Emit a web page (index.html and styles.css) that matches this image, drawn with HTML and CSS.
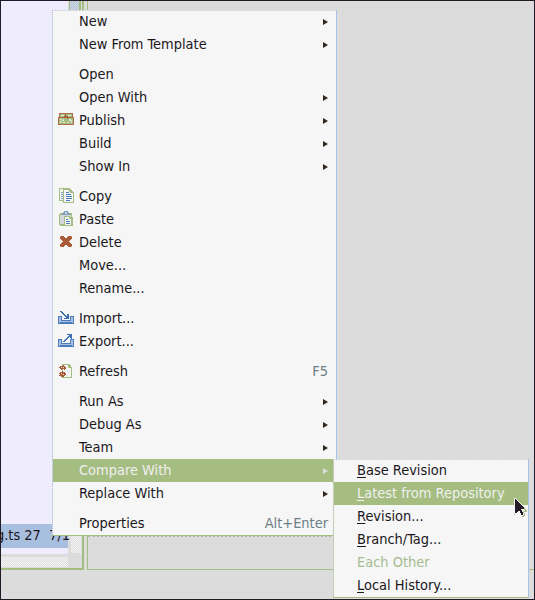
FILE: index.html
```html
<!DOCTYPE html>
<html lang="en">
<head>
<meta charset="utf-8">
<title>Compare With</title>
<link rel="stylesheet" href="styles.css">
</head>
<body>
<main class="desktop">
  <div class="panes">
    <section class="table-pane">
      <div class="table-body"></div>
      <div class="table-row">g.ts 27&nbsp; 7/1</div>
      <div class="table-gap"></div>
      <div class="h-scroll"></div>
    </section>
    <div class="v-scroll"><span class="thumb"></span><span class="hatch"></span></div>
    <section class="side-pane"><div class="side-body"></div></section>
  </div>

  <nav class="menu main-menu">
    <div class="item more">New</div>
    <div class="item more">New From Template</div>
    <hr>
    <div class="item">Open</div>
    <div class="item more">Open With</div>
    <div class="item more"><svg class="icon" viewBox="0 0 16 16"><path fill="#b06a45" d="M1 1h14v4h1v8H0V5h1z"/><path fill="#a4bd80" d="M2 2h12v3H2zM1 6h14v6H1z"/><path fill="#dfe8cd" d="M3 3h3v1H3zM10 3h3v1h-3zM2 7h2v1H2zM5 7h1v2H4v1H3v1H2V9h2V8h1zM11 7h2v1h1v3h-1V9h-2zM9 10h2v1H9zM6 10h1v1H5v-1z"/><path fill="#a85c3a" d="M7 2h1v2H7zM6 4h4v1H6zM9 5h1v2H9zM6 5h1v1H6z"/></svg>Publish</div>
    <div class="item more">Build</div>
    <div class="item more">Show In</div>
    <hr>
    <div class="item"><svg class="icon" viewBox="0 0 16 16"><path fill="#a4bd80" d="M1 0h6v13H1z"/><path fill="#f6f6f6" d="M2 1h5v11H2z"/><path fill="#7d9fcb" d="M3 4h2v1H3zM3 6h2v1H3zM3 8h2v1H3zM3 10h2v1H3z"/><path fill="#a4bd80" d="M6 0h6v1h1v1h1v1h1v1h1v11H5V1h1z"/><path fill="#f6f6f6" d="M6 2h5v2h1v1h3v9H6z"/><path fill="#4b7dbd" d="M8 4h3v1H8zM8 6h5v1H8zM8 8h6v1H8zM8 10h6v1H8zM8 12h4v1H8z"/></svg>Copy</div>
    <div class="item"><svg class="icon" viewBox="0 0 16 16"><path fill="#a4bd80" d="M2 2h3V1h6v1h3v4h1v9H2v-1H1V3h1z"/><path fill="#d5d8da" d="M2 4h11v9H2z"/><path fill="#7f9fbf" d="M6 0h4v2h2v2H4V2h2z"/><path fill="#c9d5e6" d="M7 1h2v2H7z"/><path fill="#a4bd80" d="M6 5h6v1h1v1h1v8H6z"/><path fill="#f6f6f6" d="M7 6h4v2h2v6H7z"/><path fill="#4b7dbd" d="M8 8h2v1H8zM8 10h4v1H8zM8 12h4v1H8z"/></svg>Paste</div>
    <div class="item"><svg class="icon" viewBox="0 0 16 16"><path fill="#a85c3a" d="M2 2h4v1h1v1h2V3h1V2h4v3h-1v1h-1v1h-1v1h1v1h1v1h1v3h-4v-1H9v-1H7v1H6v1H2v-3h1V9h1V8h1V7H4V6H3V5H2z"/><path fill="#cf9b80" d="M2 2h1v1H2zM13 2h1v1h-1zM2 12h1v1H2zM13 12h1v1h-1z"/></svg>Delete</div>
    <div class="item">Move...</div>
    <div class="item">Rename...</div>
    <hr>
    <div class="item"><svg class="icon" viewBox="0 0 16 16"><path fill="#4b7dbd" d="M0 6h4v4h8V6h4v8H0z"/><path fill="#aac1e4" d="M1 7h2v4h10V7h2v6H1z"/><path fill="#f6f6f6" d="M4 6h8v3H4z"/><path fill="#4b7dbd" d="M2 12h12v1H2z"/><path fill="#3c70b0" d="M2 1h2v1h1v1h1v1h1v1h1v1h1V4h2v5H6V8h2V7H7V6H6V5H5V4H4V3H3V2H2z"/></svg>Import...</div>
    <div class="item"><svg class="icon" viewBox="0 0 16 16"><path fill="#4b7dbd" d="M0 6h4v4h8V6h4v8H0z"/><path fill="#aac1e4" d="M1 7h2v4h10V7h2v6H1z"/><path fill="#f6f6f6" d="M4 6h8v3H4z"/><path fill="#4b7dbd" d="M2 12h12v1H2z"/><path fill="#3c70b0" d="M9 1h5v5h-1V5h-1V4h-1v1h-1v1H9v1H8v1H7v1H5V8h1V7h1V6h1V5h1V4h1V3h1V2H9z"/></svg>Export...</div>
    <hr>
    <div class="item"><svg class="icon" viewBox="0 0 16 16"><path fill="#a4bd80" d="M4 1h8v1h1v2h1v11H4z"/><path fill="#f6f6f6" d="M5 2h5v3h3v9H5z"/><path fill="#d9ddec" d="M9 8h1v1H9zM11 8h1v1h-1zM10 10h1v1h-1zM9 12h1v1H9z"/><path fill="#a85c3a" d="M2 3h3V2h1v1h1v1h1v2H7v1H6V6H4v1H3V6H2V5H1V4h1zM2 9h2V8h1v1h2v1h1v2H7v1H6v1H3v-1H1v-1h1v-1H1v-1h1z"/><path fill="#f2dfc8" d="M3 4h1v1H3zM5 4h1v1H5zM3 10h1v1H3zM5 11h1v1H5z"/></svg>Refresh<span class="key">F5</span></div>
    <hr>
    <div class="item more">Run As</div>
    <div class="item more">Debug As</div>
    <div class="item more">Team</div>
    <div class="item more selected">Compare With</div>
    <div class="item more">Replace With</div>
    <hr>
    <div class="item">Properties<span class="key">Alt+Enter</span></div>
  </nav>

  <nav class="menu sub-menu">
    <div class="item"><span><u>B</u>ase Revision</span></div>
    <div class="item selected"><span><u>L</u>atest from Repository</span></div>
    <div class="item"><span><u>R</u>evision...</span></div>
    <div class="item"><span><u>B</u>ranch/Tag...</span></div>
    <div class="item disabled"><span>Each Other</span></div>
    <div class="item"><span><u>L</u>ocal History...</span></div>
  </nav>

  <svg class="cursor" viewBox="0 0 14 20"><path fill="#f6f6f6" d="M0 0h2l11 12v2h-3l2 4-3 1H7l-2-4-4 2H0z"/><path fill="#a4bd80" d="M10 10h1v1h1v1h1v2h-3v1h1v3h-1v1H8v-1h1v-1h1v-2H9v-2h2v-1h-1zM0 16h1v1H0z"/><path fill="#241a26" d="M1 1h1v1h1v1h1v1h1v1h1v1h1v1h1v1h1v1h1v2H7v1h1v2h1v3H7v-2H6v-2H4v1H3v1H1z"/></svg>
</main>
</body>
</html>
```
FILE: styles.css
```css
* { box-sizing: border-box; }
body {
  margin: 0;
  font: 14.45px/23px "DejaVu Sans Condensed", "DejaVu Sans", sans-serif;
  font-stretch: condensed;
  color: #1b181c;
}
.desktop {
  position: relative;
  width: 535px;
  height: 600px;
  border: 1px solid #221a26;
  background: #dcdcdc;
  overflow: hidden;
}
.panes { display: flex; height: 569px; }
.table-pane {
  width: 67px;
  display: flex;
  flex-direction: column;
  border-bottom: 2px solid #a4bd80;
}
.table-body { height: 523px; background: #eeecfd; }
.table-row {
  height: 24px;
  background: #a9bfdf;
  white-space: nowrap;
  text-indent: -5px;
}
.table-gap { height: 6px; background: #eeecfd; }
.h-scroll {
  margin-top: 3px;
  height: 10px;
  background: repeating-conic-gradient(#dcdcdc 0 25%, #f6f6f6 0 50%) 0 0 / 2px 2px;
}
.v-scroll {
  width: 16px;
  padding: 0 1px 15px 1px;
  display: flex;
  flex-direction: column;
  border-right: 2px solid #a4bd80;
  border-bottom: 2px solid #a4bd80;
}
.v-scroll .thumb {
  height: 60px;
  border: solid #a4bd80;
  border-width: 0 2px 0 1px;
  background: repeating-conic-gradient(#dcdcdc 0 25%, #a9bfdf 0 50%) 3px 0 / 2px 2px;
}
.v-scroll .hatch {
  flex: 1;
  margin-left: 2px;
  background: repeating-conic-gradient(#dcdcdc 0 25%, #f6f6f6 0 50%) 0 0 / 2px 2px;
}
.side-pane {
  flex: 1;
  margin-left: 3px;
  border-left: 1px solid #a4bd80;
  border-bottom: 1px solid #a4bd80;
}
.side-body {
  width: 247px;
  height: 536px;
  border-bottom: 2px dotted #a4b9a0;
}
.menu { position: absolute; background: #f6f6f6; }
.main-menu {
  left: 51px;
  top: 9px;
  width: 285px;
  height: 526px;
  border-right: 1px solid #a9c2e8;
  border-bottom: 1px solid #a4bd80;
}
.main-menu::before, .sub-menu::before {
  content: "";
  position: absolute;
  left: 0;
  top: 0;
  right: 0;
  height: 1px;
  background: repeating-linear-gradient(90deg, #c4c8d0 0 1px, #e4e4e4 1px 3px);
}
.main-menu::after {
  content: "";
  position: absolute;
  left: 0;
  top: 0;
  bottom: 0;
  width: 1px;
  background: repeating-linear-gradient(#a9bfcf 0 1px, #e4e4ec 1px 2px);
}
.sub-menu {
  left: 332px;
  top: 458px;
  width: 196px;
  height: 139px;
  border-right: 1px solid #a9c2e8;
  border-bottom: 1px solid #a4bd80;
}
.sub-menu::after {
  content: "";
  position: absolute;
  left: 0;
  top: 0;
  bottom: 0;
  width: 1px;
  background: #c4cdb8;
}
.item {
  position: relative;
  height: 23px;
  display: flex;
  align-items: center;
  padding: 0 8px 0 27px;
  white-space: nowrap;
}
.sub-menu .item { padding-left: 24px; }
.menu hr { height: 7px; margin: 0; border: 0; }
.icon {
  position: absolute;
  left: 6px;
  top: 3px;
  width: 16px;
  height: 16px;
  shape-rendering: crispEdges;
}
.key { margin-left: auto; color: #6d7f86; }
.more::after {
  content: "";
  margin-left: auto;
  border: solid transparent;
  border-width: 3px 0 3px 5px;
  border-left-color: #30271f;
}
.selected { background: #a5bd81; color: #f0f0f0; }
.selected.more::after { border-left-color: #dcdcdc; }
.disabled { color: #a5bd91; }
u { text-underline-offset: 2px; text-decoration-thickness: 1px; text-decoration-skip-ink: none; }
.cursor {
  position: absolute;
  left: 513px;
  top: 497px;
  width: 14px;
  height: 20px;
  shape-rendering: crispEdges;
}
```
